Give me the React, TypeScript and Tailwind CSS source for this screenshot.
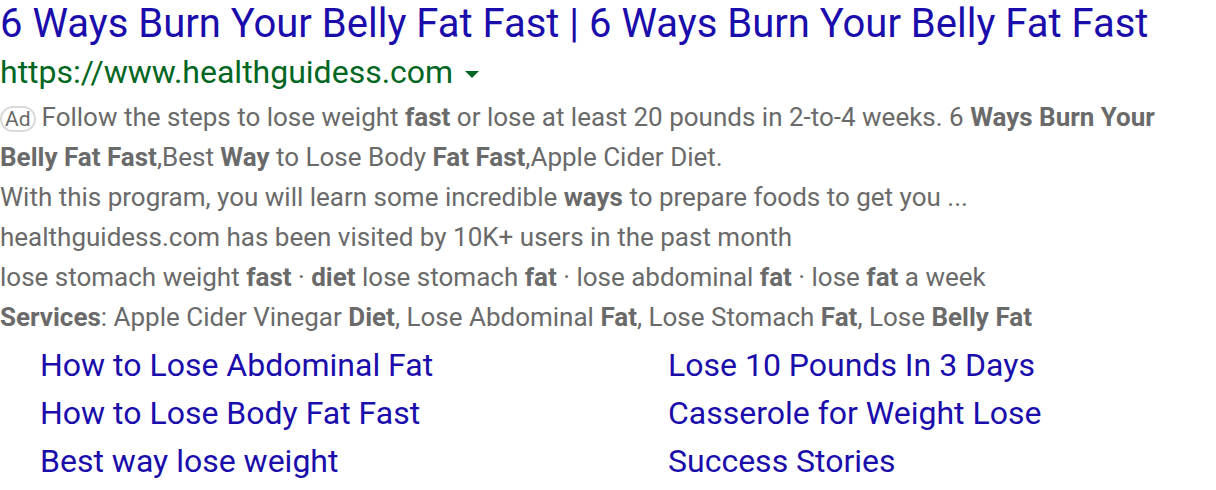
import React from "react";

const sitelinks = [
  ["How to Lose Abdominal Fat", "Lose 10 Pounds In 3 Days"],
  ["How to Lose Body Fat Fast", "Casserole for Weight Lose"],
  ["Best way lose weight", "Success Stories"],
];

function B({ children }: { children: React.ReactNode }) {
  return <b className="font-bold">{children}</b>;
}

export default function App() {
  return (
    <div className="h-[490px] w-[1216px] bg-white font-['Roboto',sans-serif]">
      <div className="whitespace-nowrap text-[40px] leading-[48px] text-[#1a0dab]">
        6 Ways Burn Your Belly Fat Fast | 6 Ways Burn Your Belly Fat Fast
      </div>
      <div className="flex items-center whitespace-nowrap text-[32px] leading-[49px] text-[#006621]">
        https://www.healthguidess.com
        <span className="ml-[12px] mt-[4px] h-0 w-0 border-x-[7px] border-t-[7px] border-x-transparent border-t-[#006621]" />
      </div>
      <div className="whitespace-nowrap text-[26px] leading-[40px] text-[#6a6a6a]">
        <div>
          <span className="mr-[6px] inline-block rounded-[13px] border-2 border-[#dadada] px-[3px] align-middle text-[21px] leading-[22px]">
            Ad
          </span>
          Follow the steps to lose weight <B>fast</B> or lose at least 20 pounds in 2-to-4 weeks. 6{" "}
          <B>Ways Burn Your</B>
          <br />
          <B>Belly Fat Fast</B>,Best <B>Way</B> to Lose Body <B>Fat Fast</B>,Apple Cider Diet.
        </div>
        <div>
          With this program, you will learn some incredible <B>ways</B> to prepare foods to get you ...
        </div>
        <div>healthguidess.com has been visited by 10K+ users in the past month</div>
        <div>
          lose stomach weight <B>fast</B> · <B>diet</B> lose stomach <B>fat</B> · lose abdominal <B>fat</B> · lose{" "}
          <B>fat</B> a week
        </div>
        <div>
          <B>Services</B>: Apple Cider Vinegar <B>Diet</B>, Lose Abdominal <B>Fat</B>, Lose Stomach <B>Fat</B>, Lose{" "}
          <B>Belly Fat</B>
        </div>
      </div>
      <div className="mt-[4px] grid grid-cols-[628px_1fr] pl-[40px] text-[32px] leading-[48px] text-[#1a0dab]">
        {sitelinks.map(([a, b]) => (
          <React.Fragment key={a}>
            <div className="whitespace-nowrap">{a}</div>
            <div className="whitespace-nowrap">{b}</div>
          </React.Fragment>
        ))}
      </div>
    </div>
  );
}
